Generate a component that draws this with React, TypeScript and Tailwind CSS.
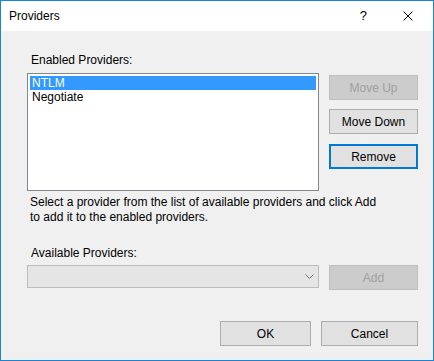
const font = { fontFamily: '"Liberation Sans", Arial, sans-serif' };

const Btn = ({
  text,
  className = "",
}: {
  text: string;
  className?: string;
}) => (
  <div
    className={`h-[25px] flex items-center justify-center text-[12px] border ${className}`}
  >
    {text}
  </div>
);

const normal = "bg-[#e1e1e1] border-[#adadad] text-black";
const disabled = "bg-[#cccccc] border-[#bfbfbf] text-[#a0a0a0]";

export default function App() {
  return (
    <div
      style={font}
      className="w-[434px] h-[361px] border border-[#1883d7] bg-[#f0f0f0] flex flex-col text-black"
    >
      <div className="h-[30px] bg-white flex items-center pl-[8px] shrink-0">
        <span className="text-[12px]">Providers</span>
        <span className="ml-auto text-[13px] mr-[36px]">?</span>
        <svg width="10" height="10" viewBox="0 0 10 10" className="mr-[20px]">
          <path d="M0.5 0.5 L9.5 9.5 M9.5 0.5 L0.5 9.5" stroke="#000" strokeWidth="1" />
        </svg>
      </div>

      <div className="pl-[26px] pt-[22px] flex flex-col">
        <div className="pl-[4px] text-[12px] leading-[15px]">Enabled Providers:</div>
        <div className="flex mt-[5px]">
          <div className="w-[292px] h-[118px] border border-[#828790] bg-white p-[2px] text-[12px]">
            <div className="h-[14px] leading-[14px] bg-[#3399ff] text-white pl-[2px]">NTLM</div>
            <div className="h-[14px] leading-[14px] pl-[2px]">Negotiate</div>
          </div>
          <div className="ml-[10px] pt-[2px] flex flex-col w-[89px]">
            <Btn text="Move Up" className={disabled} />
            <Btn text="Move Down" className={`${normal} mt-[9px]`} />
            <Btn text="Remove" className="bg-[#e1e1e1] border-2 border-[#0078d7] mt-[10px]" />
          </div>
        </div>

        <p className="mt-[4px] pl-[3px] text-[12px] leading-[15px]">
          Select a provider from the list of available providers and click Add
          <br />
          to add it to the enabled providers.
        </p>

        <div className="mt-[21px] pl-[4px] text-[12px] leading-[15px]">Available Providers:</div>
        <div className="flex mt-[4px] items-start">
          <div className="w-[292px] h-[23px] border border-[#bcbcbc] bg-[#e5e5e5] flex items-center justify-end pr-[4px]">
            <svg width="9" height="5" viewBox="0 0 9 5">
              <path d="M0.5 0.5 L4.5 4.5 L8.5 0.5" fill="none" stroke="#707070" strokeWidth="1" />
            </svg>
          </div>
          <Btn text="Add" className={`${disabled} ml-[10px] w-[89px]`} />
        </div>

        <div className="flex justify-end gap-[10px] mt-[31px] pr-[15px]">
          <Btn text="OK" className={`${normal} w-[91px]`} />
          <Btn text="Cancel" className={`${normal} w-[97px]`} />
        </div>
      </div>
    </div>
  );
}
